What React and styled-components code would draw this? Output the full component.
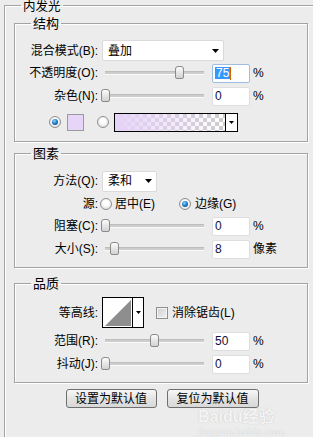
import React from 'react';
import styled, { createGlobalStyle } from 'styled-components';

const FONT = '"Liberation Sans", "Noto Sans CJK SC", "Microsoft YaHei", sans-serif';

const Global = createGlobalStyle`
  html, body { margin: 0; padding: 0; background: #ececec; }
  body {
    width: 313px; height: 437px; overflow: hidden;
    font-family: ${FONT};
    font-size: 12px; color: #000;
  }
`;

const Page = styled.div`
  position: relative;
  width: 313px;
  height: 437px;
  overflow: hidden;
  padding: 0 0 0 4px;
  box-sizing: border-box;
`;

const OuterGroup = styled.fieldset`
  margin: 0;
  padding: 0;
  width: 340px;
  min-width: 0;
  height: 470px;
  box-sizing: border-box;
  border: 1px solid #a3a3a3;
  box-shadow: inset 1px 1px 0 #fff;
`;

const Legend = styled.legend`
  margin-left: 16px;
  padding: 0 2px;
  font-size: 13px;
  line-height: 13px;
  height: 13px;
  white-space: nowrap;
`;

const OuterLegend = styled.legend`
  margin-left: 16px;
  padding: 0 2px;
  font-size: 12.5px;
  line-height: 14px;
  height: 10px;
  white-space: nowrap;
`;

const OuterBody = styled.div`
  padding: 7px 0 0 9px;
`;

const Group = styled.fieldset`
  margin: ${p => p.$mt || 0}px 0 0 0;
  padding: 0;
  width: 294px;
  min-width: 0;
  box-sizing: border-box;
  border: 1px solid #a3a3a3;
  box-shadow: 1px 1px 0 #fff, inset 1px 1px 0 #fff;
`;

const GroupBody = styled.div`
  padding: ${p => p.$pt}px 0 ${p => p.$pb}px 0;
`;

const Row = styled.div`
  display: flex;
  align-items: center;
  height: ${p => p.$h || 22}px;
  margin-top: ${p => p.$mt || 0}px;
  padding-left: ${p => p.$pl || 0}px;
`;

const Label = styled.span`
  width: 83px;
  flex-shrink: 0;
  text-align: right;
  white-space: nowrap;
  line-height: 14px;
`;

const Text = styled.span`
  margin-left: ${p => p.$ml || 0}px;
  white-space: nowrap;
  line-height: 14px;
`;

const Select = styled.div`
  margin-left: 4px;
  width: ${p => p.$w}px;
  height: 21px;
  box-sizing: border-box;
  background: #fff;
  border: 1px solid #dadada;
  border-radius: 2px;
  display: flex;
  align-items: center;
  justify-content: space-between;
  padding: 0 4px 0 5px;
  flex-shrink: 0;
  line-height: 14px;
`;

const Slider = styled.div`
  position: relative;
  margin-left: 3px;
  width: 108px;
  height: 14px;
  flex-shrink: 0;
`;

const Track = styled.div`
  position: absolute;
  left: 4px;
  right: 5px;
  top: 5px;
  height: 2px;
  background: #cdcdcd;
  border-top: 1px solid #bdbdbd;
  border-bottom: 1px solid #fafafa;
`;

const Thumb = styled.div`
  position: absolute;
  top: 0;
  width: 9px;
  height: 13px;
  box-sizing: border-box;
  border: 1px solid #8a8a8a;
  border-radius: 3px 3px 2px 2px;
  background: linear-gradient(#fdfdfd, #e2e2e2 60%, #d2d2d2);
`;

const Input = styled.div`
  margin-left: 3px;
  width: 38px;
  height: 19px;
  box-sizing: border-box;
  background: #fff;
  border: 1px solid ${p => (p.$focus ? '#9dbde3' : '#dedede')};
  border-radius: 2px;
  display: flex;
  align-items: center;
  padding-left: 2px;
  font-family: "Liberation Sans", Arial, sans-serif;
  font-size: 12px;
  color: #101040;
  flex-shrink: 0;
`;

const Selected = styled.span`
  background: #3399ff;
  color: #fff;
  line-height: 12px;
  padding: 0 1px;
`;

const Caret = styled.span`
  width: 1px;
  height: 13px;
  background: #d06000;
`;

const Unit = styled.span`
  margin-left: 3px;
  font-size: 12px;
  line-height: 14px;
`;

const Radio = styled.span`
  margin-left: ${p => p.$ml || 0}px;
  width: 12px;
  height: 12px;
  border-radius: 50%;
  box-sizing: border-box;
  border: 1px solid #8f8f8f;
  background: radial-gradient(circle at 50% 40%, #ffffff 30%, #d8d8d8 90%);
  display: inline-flex;
  align-items: center;
  justify-content: center;
  flex-shrink: 0;
  &::after {
    content: '';
    display: ${p => (p.$on ? 'block' : 'none')};
    width: 6px;
    height: 6px;
    border-radius: 50%;
    background: radial-gradient(circle at 40% 35%, #8fd6ff 0%, #1a78c2 50%, #0a3d6e 100%);
  }
`;

const Checkbox = styled.span`
  margin-left: ${p => p.$ml || 0}px;
  width: 12px;
  height: 12px;
  box-sizing: border-box;
  border: 1px solid #8f8f8f;
  background: linear-gradient(135deg, #cfcfcf, #f2f2f2);
  box-shadow: inset 0 0 0 1px #f4f4f4;
  flex-shrink: 0;
`;

const Swatch = styled.span`
  margin-left: 6px;
  width: 17px;
  height: 17px;
  box-sizing: border-box;
  border: 1px solid #9a9a9a;
  background: #e7d5f7;
  flex-shrink: 0;
`;

const GradientBox = styled.div`
  margin-left: 5px;
  width: 124px;
  height: 19px;
  box-sizing: border-box;
  border: 1px solid #000;
  display: flex;
  flex-shrink: 0;
`;

const GradientFill = styled.div`
  flex: 1;
  background-color: #fff;
  background-image:
    linear-gradient(to right, rgba(230, 211, 248, 1), rgba(230, 211, 248, 0)),
    linear-gradient(45deg, #cccccc 25%, transparent 25%, transparent 75%, #cccccc 75%),
    linear-gradient(45deg, #cccccc 25%, transparent 25%, transparent 75%, #cccccc 75%);
  background-size: 100% 100%, 8px 8px, 8px 8px;
  background-position: 0 0, 0 0, 4px 4px;
`;

const DropPart = styled.div`
  width: 11px;
  border-left: 1px solid #000;
  background: #fff;
  display: flex;
  align-items: center;
  justify-content: center;
`;

const ContourBox = styled.div`
  margin-left: 4px;
  width: 42px;
  height: 31px;
  box-sizing: border-box;
  border: 1px solid #000;
  display: flex;
  flex-shrink: 0;
`;

const ContourPreview = styled.div`
  width: 29px;
  background: #fff;
  padding: 2px 1px 1px 2px;
  box-sizing: border-box;
  display: flex;
`;

const Buttons = styled.div`
  display: flex;
  justify-content: center;
  gap: 10px;
  width: 294px;
  padding-left: 2px;
  box-sizing: border-box;
  margin-top: 6px;
`;

const Button = styled.button`
  width: ${p => p.$w}px;
  height: 19px;
  box-sizing: border-box;
  border: 1px solid #6f6f6f;
  border-radius: 3px;
  background: linear-gradient(#f8f8f8, #e4e4e4 50%, #d8d8d8);
  font-family: ${FONT};
  font-size: 12px;
  line-height: 16px;
  padding: 0;
  color: #000;
`;

const Watermark = styled.div`
  position: absolute;
  left: 198px;
  top: 408px;
  color: rgba(255, 255, 255, 0.85);
  text-shadow: 0 0 1px rgba(120, 120, 120, 0.45);
  pointer-events: none;
  display: flex;
  flex-direction: column;
  align-items: flex-start;
`;

const WmBig = styled.span`
  font-weight: bold;
  font-size: 16px;
  line-height: 17px;
`;

const WmSmall = styled.span`
  font-family: "Liberation Serif", serif;
  font-size: 11px;
  line-height: 12px;
  letter-spacing: 0.3px;
`;

const Arrow = ({ w = 7, h = 4 }) => (
  <svg width={w} height={h} viewBox={`0 0 ${w} ${h}`}>
    <polygon points={`0,0 ${w},0 ${w / 2},${h}`} fill="#000" />
  </svg>
);

const SliderCtl = ({ pos }) => (
  <Slider>
    <Track />
    <Thumb style={{ left: pos }} />
  </Slider>
);

const SliderRow = ({ label, pos, value, unit, focus, mt }) => (
  <Row $mt={mt}>
    <Label>{label}</Label>
    <SliderCtl pos={pos} />
    <Input $focus={focus}>
      {focus ? (
        <>
          <Selected>{value}</Selected>
          <Caret />
        </>
      ) : (
        value
      )}
    </Input>
    <Unit>{unit}</Unit>
  </Row>
);

export default function App() {
  return (
    <>
      <Global />
      <Page>
        <OuterGroup>
          <OuterLegend>内发光</OuterLegend>
          <OuterBody>
            <Group>
              <Legend>结构</Legend>
              <GroupBody $pt={10} $pb={9}>
                <Row $h={21}>
                  <Label>混合模式(B):</Label>
                  <Select $w={122}>
                    <span>叠加</span>
                    <Arrow />
                  </Select>
                </Row>
                <SliderRow label="不透明度(O):" pos={74} value="75" unit="%" focus mt={1} />
                <SliderRow label="杂色(N):" pos={0} value="0" unit="%" mt={1} />
                <Row $h={20} $mt={5} $pl={34}>
                  <Radio $on />
                  <Swatch />
                  <Radio $ml={13} />
                  <GradientBox>
                    <GradientFill />
                    <DropPart>
                      <Arrow w={5} h={3} />
                    </DropPart>
                  </GradientBox>
                </Row>
              </GroupBody>
            </Group>

            <Group $mt={5}>
              <Legend>图素</Legend>
              <GroupBody $pt={10} $pb={7}>
                <Row>
                  <Label>方法(Q):</Label>
                  <Select $w={55}>
                    <span>柔和</span>
                    <Arrow />
                  </Select>
                </Row>
                <Row $mt={1}>
                  <Label>源:</Label>
                  <Radio $ml={2} />
                  <Text $ml={3}>居中(E)</Text>
                  <Radio $ml={24} $on />
                  <Text $ml={4}>边缘(G)</Text>
                </Row>
                <SliderRow label="阻塞(C):" pos={0} value="0" unit="%" />
                <SliderRow label="大小(S):" pos={9} value="8" unit="像素" mt={1} />
              </GroupBody>
            </Group>

            <Group $mt={9}>
              <Legend>品质</Legend>
              <GroupBody $pt={7} $pb={7}>
                <Row $h={31}>
                  <Label>等高线:</Label>
                  <ContourBox>
                    <ContourPreview>
                      <svg width="26" height="26" viewBox="0 0 26 26">
                        <polygon points="0,26 26,0 26,26" fill="#8e8e8e" />
                      </svg>
                    </ContourPreview>
                    <DropPart>
                      <Arrow w={5} h={3} />
                    </DropPart>
                  </ContourBox>
                  <Checkbox $ml={12} />
                  <Text $ml={4}>消除锯齿(L)</Text>
                </Row>
                <SliderRow label="范围(R):" pos={49} value="50" unit="%" mt={2} />
                <SliderRow label="抖动(J):" pos={0} value="0" unit="%" mt={1} />
              </GroupBody>
            </Group>

            <Buttons>
              <Button $w={91}>设置为默认值</Button>
              <Button $w={92}>复位为默认值</Button>
            </Buttons>
          </OuterBody>
        </OuterGroup>
        <Watermark>
          <WmBig>Baidu经验</WmBig>
          <WmSmall>jingyan.baidu.com</WmSmall>
        </Watermark>
      </Page>
    </>
  );
}
